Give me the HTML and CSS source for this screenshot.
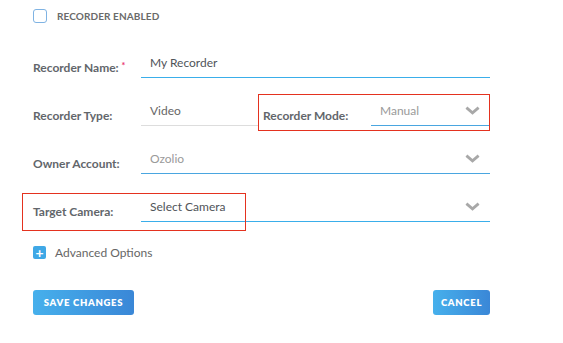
FILE: index.html
```html
<!DOCTYPE html>
<html lang="en">
<head>
  <meta charset="UTF-8" />
  <title>Recorder Settings</title>
  <link rel="stylesheet" href="styles.css">
</head>
<body>
  <main class="form">
    <label class="check-row">
      <span class="checkbox"></span>
      <span class="check-label">RECORDER ENABLED</span>
    </label>

    <div class="field-row first">
      <span class="field-label">Recorder Name: <span class="req">*</span></span>
      <div class="input active dark">My Recorder</div>
    </div>

    <div class="field-row">
      <span class="field-label">Recorder Type:</span>
      <div class="input plain">Video</div>
      <div class="group">
        <span class="field-label">Recorder Mode:</span>
        <div class="input select muted">
          Manual
          <svg class="chevron" viewBox="0 0 16 9"><path d="M1.5 1.5 L8 7 L14.5 1.5" /></svg>
        </div>
      </div>
      <div class="mark mark-mode"></div>
    </div>

    <div class="field-row">
      <span class="field-label">Owner Account:</span>
      <div class="input select muted">
        Ozolio
        <svg class="chevron" viewBox="0 0 16 9"><path d="M1.5 1.5 L8 7 L14.5 1.5" /></svg>
      </div>
    </div>

    <div class="field-row">
      <span class="field-label">Target Camera:</span>
      <div class="input select active dark">
        Select Camera
        <svg class="chevron" viewBox="0 0 16 9"><path d="M1.5 1.5 L8 7 L14.5 1.5" /></svg>
      </div>
      <div class="mark mark-camera"></div>
    </div>

    <div class="advanced">
      <span class="plus">+</span>
      <span>Advanced Options</span>
    </div>

    <div class="actions">
      <button class="btn btn-save">SAVE CHANGES</button>
      <button class="btn btn-cancel">CANCEL</button>
    </div>
  </main>
</body>
</html>
```

FILE: styles.css
```css
* {
  box-sizing: border-box;
  margin: 0;
  padding: 0;
}

body {
  background: #fff;
  font-family: 'Lato', 'Open Sans', sans-serif;
  color: #666;
}

.form {
  width: 490px;
  padding: 9px 0 0 33px;
}

.check-row {
  display: flex;
  align-items: center;
  height: 14px;
}

.checkbox {
  width: 14px;
  height: 14px;
  border: 1.5px solid #7fb3e3;
  border-radius: 3px;
  margin-right: 10px;
}

.check-label {
  font-size: 10px;
  font-weight: 700;
  color: #6a6a6a;
  letter-spacing: 0.1px;
}

.field-row {
  position: relative;
  display: flex;
  align-items: center;
  margin-top: 20px;
}

.field-row.first {
  margin-top: 27px;
}

.field-label {
  width: 108px;
  flex: none;
  font-size: 12px;
  font-weight: 700;
  color: #62666b;
  padding-top: 7px;
}

.req {
  color: #e8336b;
  font-size: 9px;
  vertical-align: 3px;
}

.input {
  flex: 1;
  height: 28px;
  display: flex;
  align-items: center;
  padding: 0 0 3px 9px;
  font-size: 12px;
  border-bottom: 1.5px solid #4aa6e0;
  color: #666;
}

.input.active {
  border-bottom-color: #3aaeea;
}

.input.plain {
  flex: none;
  width: 117px;
  border-bottom: 1px solid #ddd;
}

.input.dark {
  color: #505459;
}

.input.muted {
  color: #9a9a9a;
}

.input.select {
  justify-content: space-between;
  padding-right: 10px;
}

.chevron {
  width: 15px;
  height: 9px;
  fill: none;
  stroke: #a8a8a8;
  stroke-width: 3;
}

.group {
  flex: 1;
  display: flex;
  align-items: center;
  padding-left: 5px;
}

.mark {
  position: absolute;
  border: 1px solid #e4321f;
  pointer-events: none;
}

.mark-mode {
  left: 225px;
  right: 0;
  top: -4px;
  height: 37px;
}

.mark-camera {
  left: -11px;
  width: 224px;
  top: -1px;
  height: 38px;
}

.advanced {
  display: flex;
  align-items: center;
  margin-top: 23px;
  font-size: 12px;
  color: #666;
}

.plus {
  width: 13px;
  height: 13px;
  background: #3fa8e6;
  border-radius: 2px;
  color: #fff;
  font-size: 14px;
  font-weight: 700;
  line-height: 13px;
  text-align: center;
  margin-right: 9px;
}

.actions {
  display: flex;
  justify-content: space-between;
  margin-top: 30px;
}

.btn {
  height: 25px;
  border: none;
  border-radius: 3px;
  background: linear-gradient(to right, #46b0ec, #3a87d7);
  color: #fff;
  font-family: 'Lato', sans-serif;
  font-size: 9.5px;
  font-weight: 800;
  letter-spacing: 0.7px;
}

.btn-save {
  width: 101px;
}

.btn-cancel {
  width: 57px;
}
```
